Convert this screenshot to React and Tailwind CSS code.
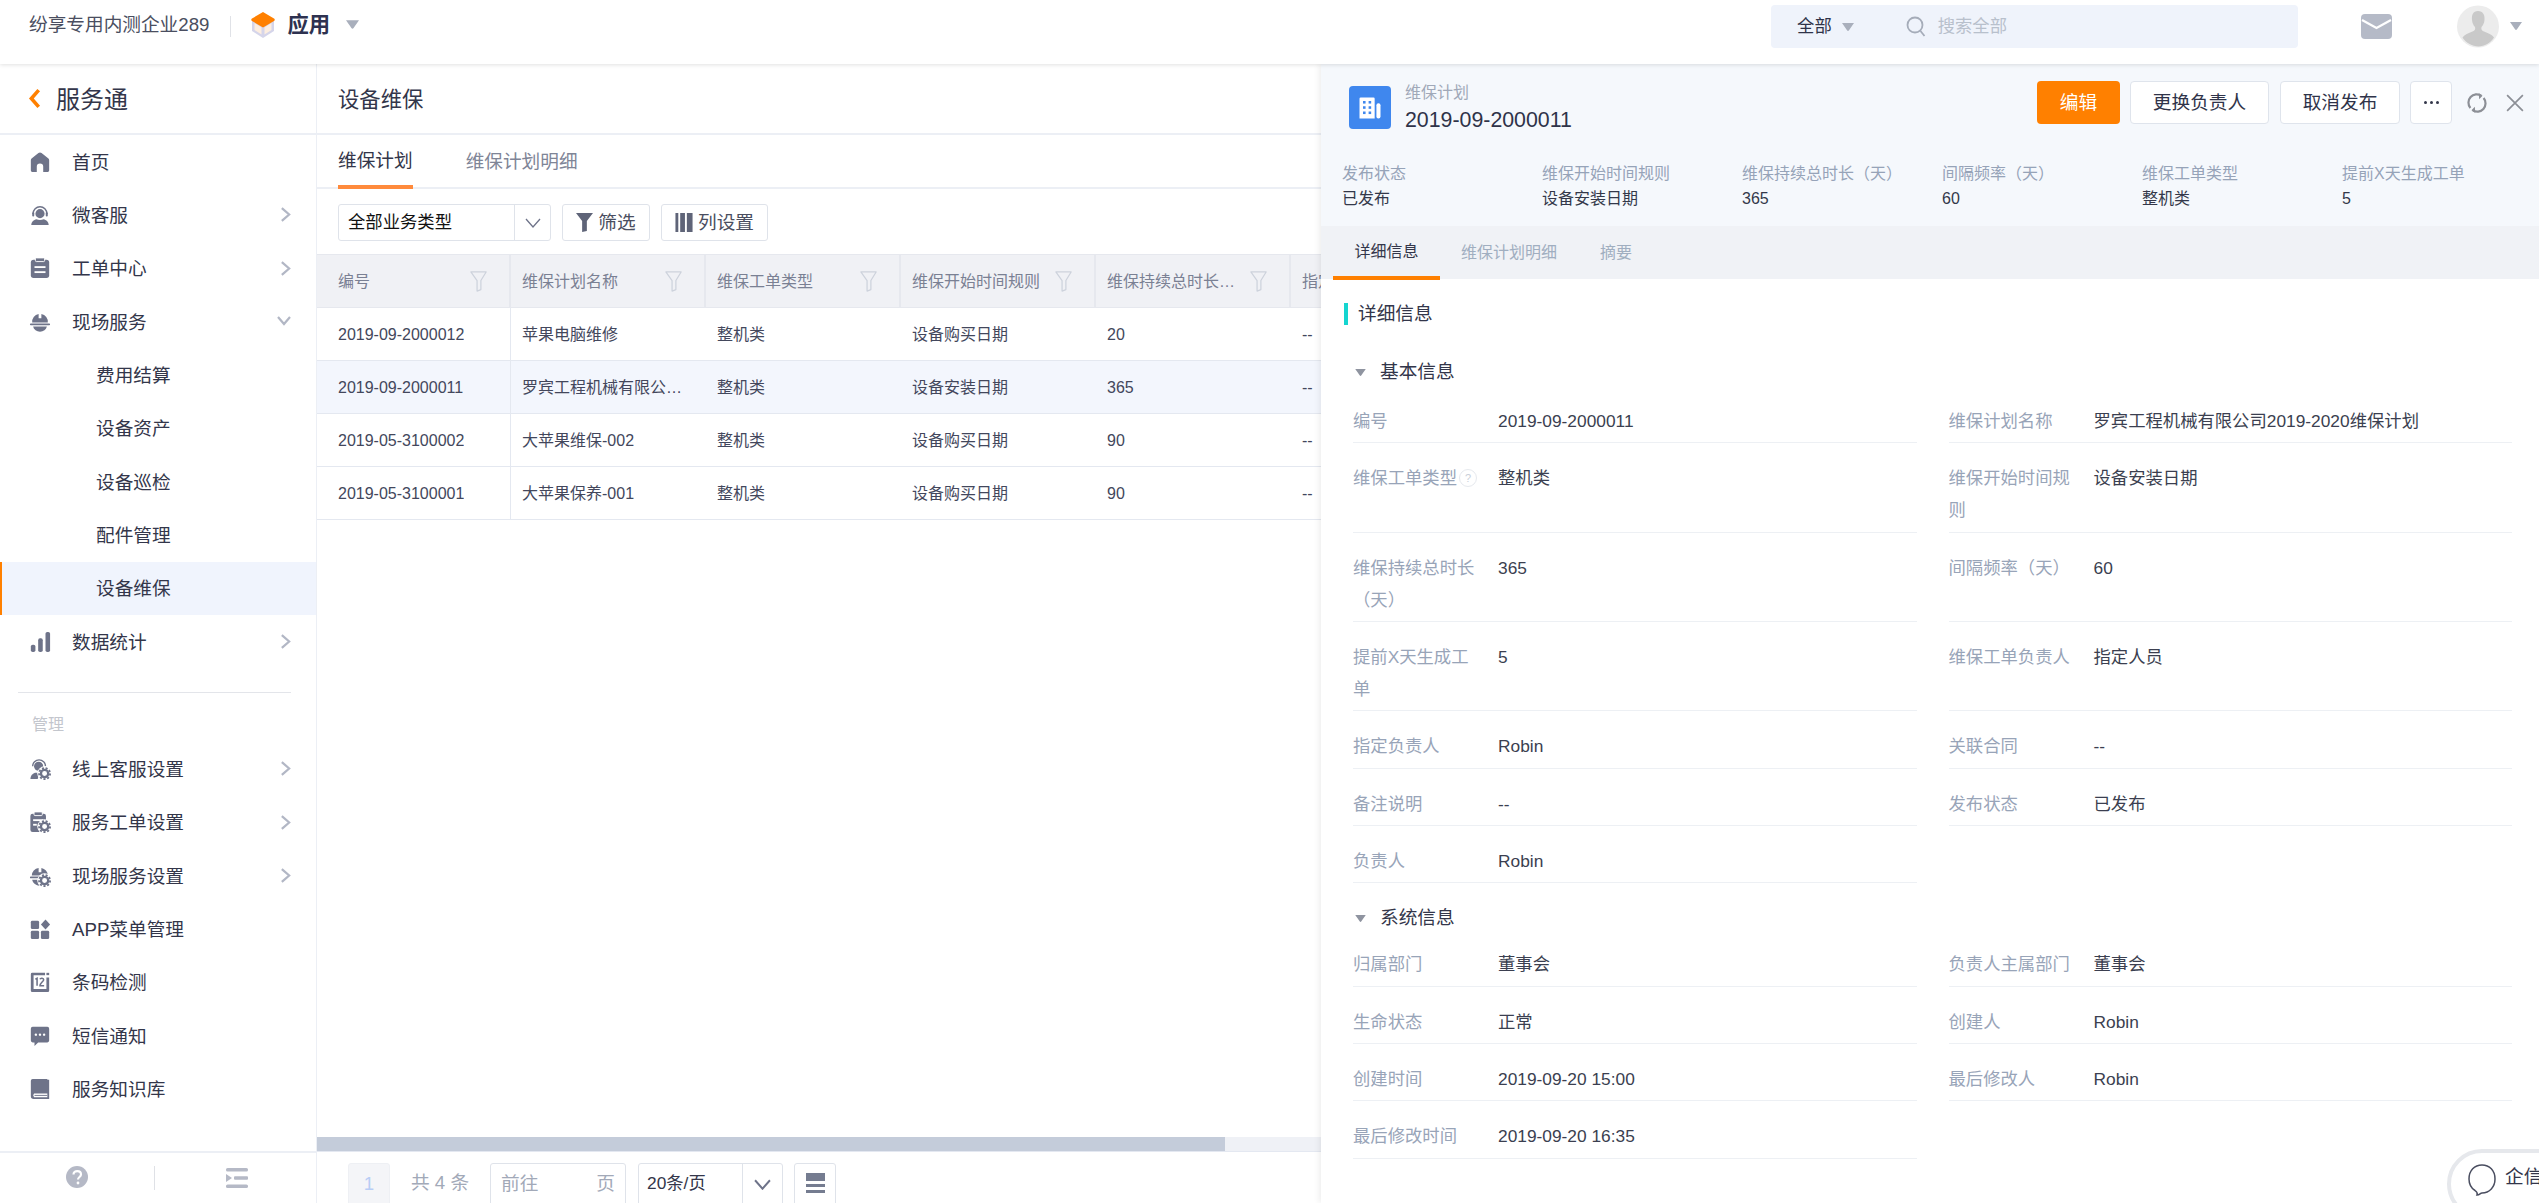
import React from 'react';

const ICON = '#6e7389';

function Gear({ x = 17, y = 17 }) {
  return (
    <g>
      <circle cx={x} cy={y} r="8" fill="#fff" />
      <circle cx={x} cy={y} r="4" fill="none" stroke={ICON} strokeWidth="2.6" />
      <circle cx={x} cy={y} r="6" fill="none" stroke={ICON} strokeWidth="2" strokeDasharray="2.2 1.9" />
    </g>
  );
}

const icons = {
  home: <path d="M12 1.5c.6 0 1.2.2 1.7.6l7.5 6.2c.5.4.8 1.1.8 1.8V21c0 1.1-.9 2-2 2h-4.5v-6a3.5 3.5 0 0 0-7 0v6H4c-1.1 0-2-.9-2-2V10.100c0-.7.3-1.400.8-1.800l7.500-6.200c.5-.4 1.100-.6 1.700-.6z" fill={ICON} />,
  agent: (
    <g>
      <path d="M4.500 10.500a7.500 7.500 0 0 1 15 0" fill="none" stroke={ICON} strokeWidth="1.600" />
      <circle cx="12" cy="10.500" r="5" fill={ICON} />
      <rect x="3.500" y="9" width="2.200" height="4.500" rx="1" fill={ICON} />
      <rect x="18.300" y="9" width="2.200" height="4.500" rx="1" fill={ICON} />
      <path d="M2.500 23c0-3.800 3-6 5.500-6.500 2.500 1.200 5.500 1.200 8 0 2.500.5 5.500 2.700 5.500 6.500z" fill={ICON} />
    </g>
  ),
  order: (
    <g>
      <rect x="2" y="3" width="20" height="20" rx="3" fill={ICON} />
      <rect x="7" y="1" width="10" height="4" rx="1" fill={ICON} stroke="#fff" strokeWidth="1" />
      <rect x="6" y="10" width="12" height="2" fill="#fff" />
      <rect x="6" y="15.500" width="12" height="2" fill="#fff" />
    </g>
  ),
  helmet: (
    <g>
      <path d="M3.500 12.500A8.500 8.500 0 0 1 10.500 3.200V8h3V3.200a8.500 8.500 0 0 1 7 9.300z" fill={ICON} />
      <rect x="1" y="13.500" width="22" height="2" rx="1" fill={ICON} />
      <path d="M4.500 17h15c-.8 3.600-3.800 5.500-7.500 5.500S5.300 20.600 4.500 17z" fill={ICON} />
    </g>
  ),
  chart: (
    <g>
      <rect x="2" y="15" width="5" height="8" rx="2" fill={ICON} />
      <rect x="10" y="8" width="5" height="15" rx="2" fill={ICON} />
      <rect x="18" y="1" width="5" height="22" rx="2" fill={ICON} />
    </g>
  ),
  agentGear: (
    <g>
      <path d="M4 9a7 7 0 0 1 14 0" fill="none" stroke={ICON} strokeWidth="1.500" />
      <circle cx="10.500" cy="9" r="5" fill={ICON} />
      <path d="M1.500 23c0-3.500 2-6 5-7h5l-2 7z" fill={ICON} />
      <Gear />
    </g>
  ),
  orderGear: (
    <g>
      <rect x="1.500" y="3" width="17" height="20" rx="2.500" fill={ICON} />
      <rect x="5.500" y="1" width="9" height="4" rx="1" fill={ICON} stroke="#fff" strokeWidth="1" />
      <rect x="4.500" y="9" width="11" height="2" fill="#fff" />
      <rect x="4.500" y="14" width="4" height="2" fill="#fff" />
      <Gear />
    </g>
  ),
  helmetGear: (
    <g>
      <path d="M3 11.500A8.500 8.500 0 0 1 10.500 3.200V8h3V3.200a8.500 8.500 0 0 1 7 8.300z" fill={ICON} />
      <rect x="1" y="12.500" width="20" height="2" rx="1" fill={ICON} />
      <path d="M3.500 16h11v6.500c-5 .5-10-1.500-11-6.500z" fill={ICON} />
      <Gear />
    </g>
  ),
  apps: (
    <g>
      <rect x="2" y="3" width="9" height="9" rx="1.500" fill={ICON} />
      <path d="M18 1.500l5 5.500-5 5.500-5-5.500z" fill={ICON} />
      <rect x="2" y="14" width="9" height="9" rx="1.500" fill={ICON} />
      <rect x="13" y="14" width="9" height="9" rx="1.500" fill={ICON} />
    </g>
  ),
  barcode: (
    <g>
      <path d="M3.500 2h14v2.500H5v15h14V7h3v14.500a1.500 1.500 0 0 1-1.500 1.500h-17A1.500 1.500 0 0 1 2 21.500v-18A1.500 1.500 0 0 1 3.500 2z" fill={ICON} />
      <rect x="19" y="2" width="3" height="2.500" fill={ICON} />
      <path d="M7 9l1.800-1v8M12 9c.5-1.500 4-1.500 4 .5 0 2-4 3.500-4 6.500h4.500" fill="none" stroke={ICON} strokeWidth="1.700" />
    </g>
  ),
  sms: (
    <g>
      <path d="M4 2h16a2 2 0 0 1 2 2v13a2 2 0 0 1-2 2H10l-4 4v-4H4a2 2 0 0 1-2-2V4a2 2 0 0 1 2-2z" fill={ICON} />
      <circle cx="7.500" cy="10.500" r="1.300" fill="#fff" />
      <circle cx="12" cy="10.500" r="1.300" fill="#fff" />
      <circle cx="16.500" cy="10.500" r="1.300" fill="#fff" />
    </g>
  ),
  book: (
    <g>
      <path d="M4 1h16v16H5.500a3 3 0 0 0 0 4H20V2h2v21H5a3 3 0 0 1-3-3V3a2 2 0 0 1 2-2z" fill={ICON} />
      <path d="M6 19h14" stroke={ICON} strokeWidth="1" />
    </g>
  ),
};

function Icon({ name }) {
  return (
    <svg viewBox="0 0 24 24" className="w-[22px] h-[22px] shrink-0">
      {icons[name]}
    </svg>
  );
}

function Chevron({ down }) {
  if (down) {
    return (
      <svg viewBox="0 0 14 10" className="w-[14px] h-[10px] mb-[2px]" fill="none" stroke="#b2b7c5" strokeWidth="2.200">
        <polyline points="1,1 7,8 13,1" />
      </svg>
    );
  }
  return (
    <svg viewBox="0 0 12 18" className="w-[11px] h-[17px]" fill="none" stroke="#b2b7c5" strokeWidth="2.400">
      <polyline points="2,2 10,9 2,16" />
    </svg>
  );
}

function Caret({ className = 'w-[13px] h-[9px]', color = '#a9afbc' }) {
  return (
    <svg viewBox="0 0 12 8" className={className}>
      <path d="M0 0h12L7 7.200a1.200 1.200 0 0 1-2 0z" fill={color} />
    </svg>
  );
}

function FilterOutline() {
  return (
    <svg viewBox="0 0 18 22" className="w-[19px] h-[21px] shrink-0" fill="none" stroke="#cdd2dc" strokeWidth="1.300">
      <path d="M1 1h16l-5.500 9v9.500L7.500 21V10z" strokeLinejoin="round" />
    </svg>
  );
}

const menuTop = [
  { name: '首页', icon: 'home' },
  { name: '微客服', icon: 'agent', arrow: true },
  { name: '工单中心', icon: 'order', arrow: true },
  { name: '现场服务', icon: 'helmet', open: true },
];
const subMenu = ['费用结算', '设备资产', '设备巡检', '配件管理', '设备维保'];
const menuAdmin = [
  { name: '线上客服设置', icon: 'agentGear', arrow: true },
  { name: '服务工单设置', icon: 'orderGear', arrow: true },
  { name: '现场服务设置', icon: 'helmetGear', arrow: true },
  { name: 'APP菜单管理', icon: 'apps' },
  { name: '条码检测', icon: 'barcode' },
  { name: '短信通知', icon: 'sms' },
  { name: '服务知识库', icon: 'book' },
];

function MenuItem({ item }) {
  return (
    <div className="h-[53.33px] flex items-center pl-[29px] pr-[25px] text-[18.67px] text-[#33364a]">
      <Icon name={item.icon} />
      <span className="ml-[21px] flex-1 pt-[2px]">{item.name}</span>
      {item.arrow && <Chevron />}
      {item.open && <Chevron down />}
    </div>
  );
}

function Sidebar() {
  return (
    <aside className="w-[317px] shrink-0 flex flex-col border-r border-[#eceff5] bg-white">
      <div className="h-[71px] flex items-center pl-[28px] border-b-2 border-[#eceff5]">
        <svg viewBox="0 0 12 20" className="w-[13px] h-[21px]" fill="none" stroke="#ff8000" strokeWidth="3.400">
          <polyline points="10,2 3,10 10,18" />
        </svg>
        <span className="ml-[15px] pt-[2px] text-[24px] text-[#33364a]">服务通</span>
      </div>
      <div className="flex-1">
        {menuTop.map((m) => <MenuItem key={m.name} item={m} />)}
        {subMenu.map((s) => (
          <div
            key={s}
            className={`h-[53.33px] flex items-center pt-[2px] text-[18.67px] text-[#33364a] ${s === '设备维保' ? 'pl-[94px] border-l-2 border-[#ff8000] bg-[#f0f4fd]' : 'pl-[96px]'}`}
          >
            {s}
          </div>
        ))}
        <MenuItem item={{ name: '数据统计', icon: 'chart', arrow: true }} />
        <div className="mt-[24px] ml-[18px] mr-[25px] border-t border-[#e3e5ea]" />
        <div className="h-[49px] flex items-end pb-[8px] pl-[32px] text-[16px] leading-[18px] text-[#c3c6cd]">管理</div>
        {menuAdmin.map((m) => <MenuItem key={m.name} item={m} />)}
      </div>
      <div className="h-[52px] border-t-2 border-[#eceff5] flex items-center">
        <div className="w-[155px] h-[24px] flex justify-center border-r border-[#dfe1e6]">
          <svg viewBox="0 0 22 22" className="w-[22px] h-[22px]">
            <circle cx="11" cy="11" r="11" fill="#b5b9c6" />
            <path d="M7.500 8.500c0-4.500 7.500-4.500 7.500 0 0 2.500-3 2.500-3 5" fill="none" stroke="#fff" strokeWidth="2.200" />
            <circle cx="12" cy="17" r="1.400" fill="#fff" />
          </svg>
        </div>
        <div className="flex-1 flex justify-center pl-[2px]">
          <svg viewBox="0 0 22 20" className="w-[22px] h-[20px]" fill="#b5b9c6">
            <rect x="0" y="0" width="22" height="3.600" rx="1.600" />
            <rect x="8" y="8.200" width="14" height="3.600" rx="1" />
            <path d="M0 6l6 4-6 4z" />
            <rect x="0" y="16.400" width="22" height="3.600" rx="1.600" />
          </svg>
        </div>
      </div>
    </aside>
  );
}

const columns = ['编号', '维保计划名称', '维保工单类型', '维保开始时间规则', '维保持续总时长（天）', '指定负责人'];
const rows = [
  ['2019-09-2000012', '苹果电脑维修', '整机类', '设备购买日期', '20', '--'],
  ['2019-09-2000011', '罗宾工程机械有限公司2019-2020维保计划', '整机类', '设备安装日期', '365', '--'],
  ['2019-05-3100002', '大苹果维保-002', '整机类', '设备购买日期', '90', '--'],
  ['2019-05-3100001', '大苹果保养-001', '整机类', '设备购买日期', '90', '--'],
];

function MainPanel() {
  return (
    <main className="w-[1004px] shrink-0 flex flex-col overflow-hidden bg-white">
      <div className="h-[71px] flex items-center pl-[21px] pt-[4px] border-b-2 border-[#eceff5] text-[21.33px] text-[#33364a]">设备维保</div>
      <div className="h-[54px] flex items-stretch pl-[21px] border-b-2 border-[#eceff5] text-[18.67px]">
        <div className="flex items-center pt-[2px] h-[54px] border-b-4 border-[#ff8a3c] text-[#33364a]">维保计划</div>
        <div className="flex items-center pt-[2px] h-[52px] ml-[53px] text-[#7f8597]">维保计划明细</div>
      </div>
      <div className="mt-[15px] ml-[21px] flex items-stretch h-[37px] gap-[11px]">
        <div className="w-[213px] flex items-center border border-[#dfe3ea] rounded-[3px]">
          <span className="flex-1 pl-[9px] text-[17.33px] text-[#111]">全部业务类型</span>
          <div className="w-[36px] h-full border-l border-[#dfe3ea] flex items-center justify-center">
            <svg viewBox="0 0 16 10" className="w-[16px] h-[10px]" fill="none" stroke="#6e7389" strokeWidth="1.300"><polyline points="1,1 8,9 15,1" /></svg>
          </div>
        </div>
        <div className="w-[88px] flex items-center justify-center gap-[5px] border border-[#dfe3ea] rounded-[3px] text-[18.67px] text-[#4a4e60]">
          <svg viewBox="0 0 18 20" className="w-[17px] h-[19px]" fill="#5f6478"><path d="M0 0h18l-6.500 8.500V19l-5 1V8.500z" /></svg>
          筛选
        </div>
        <div className="w-[107px] flex items-center justify-center gap-[5px] border border-[#dfe3ea] rounded-[3px] text-[18.67px] text-[#4a4e60]">
          <svg viewBox="0 0 18 20" className="w-[18px] h-[19px]" fill="#5f6478">
            <rect x="0" y="0" width="3" height="20" />
            <rect x="5" y="0" width="5" height="20" />
            <rect x="12" y="0" width="6" height="20" />
          </svg>
          列设置
        </div>
      </div>
      <div className="mt-[13px] flex-1 min-h-0">
        <div className="flex h-[54px] bg-[#f0f1f5] border-y border-[#e6e8ee]">
          {columns.map((c, i) => (
            <div key={c} className={`shrink-0 flex items-center border-r-2 border-[#e6e8ee] pr-[21px] text-[16px] text-[#7a8093] ${i === 0 ? 'w-[194px] pl-[21px]' : 'w-[195px] pl-[11px]'}`}>
              <span className="flex-1 truncate pr-[8px] pt-[1px]">{c}</span>
              <FilterOutline />
            </div>
          ))}
        </div>
        {rows.map((r, idx) => (
          <div key={r[0]} className={`flex h-[53px] border-b border-[#e4e8f0] ${idx === 1 ? 'bg-[#f3f6fd]' : ''}`}>
            {r.map((v, i) => (
              <div key={i} className={`shrink-0 flex items-center text-[16px] text-[#43475c] ${i === 0 ? 'w-[194px] pl-[21px] border-r border-[#e4e8f0]' : 'w-[195px] pl-[11px] pr-[15px]'}`}>
                <span className="truncate pt-[2px]">{v}</span>
              </div>
            ))}
          </div>
        ))}
      </div>
      <div className="h-[15px] bg-[#eff1f6] border-b border-[#e4e8f1]">
        <div className="w-[908px] h-[14px] bg-[#c4ccda]" />
      </div>
      <div className="h-[51px] flex items-start pt-[11px] pl-[31px] overflow-hidden">
        <div className="w-[42px] h-[60px] bg-[#f4f5f8] border border-[#eef0f4] rounded-[3px] pt-[6px] text-center text-[18.67px] text-[#b8cdf5]">1</div>
        <div className="ml-[21px] w-[79px] pt-[6px] text-[18.67px] text-[#a2a9b8]">共 4 条</div>
        <div className="w-[136px] h-[60px] border border-[#dfe3ea] rounded-[3px] flex justify-between px-[10px] pt-[6px] text-[18.67px] text-[#a2a9b8]">
          <span>前往</span>
          <span>页</span>
        </div>
        <div className="ml-[12px] w-[145px] h-[60px] border border-[#dfe3ea] rounded-[3px] flex">
          <span className="w-[103px] pl-[8px] pt-[7px] text-[17.33px] text-[#33364a]">20条/页</span>
          <div className="flex-1 border-l border-[#dfe3ea] flex justify-center pt-[15px]">
            <svg viewBox="0 0 16 10" className="w-[17px] h-[11px]" fill="none" stroke="#6e7389" strokeWidth="1.800"><polyline points="1,1 8,9 15,1" /></svg>
          </div>
        </div>
        <div className="ml-[11px] w-[42px] h-[60px] border border-[#dfe3ea] rounded-[3px] flex flex-col items-center pt-[9px] gap-[3px]">
          <div className="w-[19px] h-[8px] bg-[#757c90]" />
          <div className="w-[19px] h-[3px] bg-[#757c90]" />
          <div className="w-[19px] h-[3px] bg-[#757c90]" />
        </div>
      </div>
    </main>
  );
}

const summary = [
  ['发布状态', '已发布'],
  ['维保开始时间规则', '设备安装日期'],
  ['维保持续总时长（天）', '365'],
  ['间隔频率（天）', '60'],
  ['维保工单类型', '整机类'],
  ['提前X天生成工单', '5'],
];

const basicFields = [
  ['编号', '2019-09-2000011'],
  ['维保计划名称', '罗宾工程机械有限公司2019-2020维保计划'],
  ['维保工单类型', '整机类', true],
  ['维保开始时间规则', '设备安装日期'],
  ['维保持续总时长（天）', '365'],
  ['间隔频率（天）', '60'],
  ['提前X天生成工单', '5'],
  ['维保工单负责人', '指定人员'],
  ['指定负责人', 'Robin'],
  ['关联合同', '--'],
  ['备注说明', '--'],
  ['发布状态', '已发布'],
  ['负责人', 'Robin'],
];

const systemFields = [
  ['归属部门', '董事会'],
  ['负责人主属部门', '董事会'],
  ['生命状态', '正常'],
  ['创建人', 'Robin'],
  ['创建时间', '2019-09-20 15:00'],
  ['最后修改人', 'Robin'],
  ['最后修改时间', '2019-09-20 16:35'],
];

function Field({ label, value, hint }) {
  return (
    <div className="flex pt-[19px] pb-[5.33px] border-b border-[#edf0f4] text-[17.33px] leading-[32px]">
      <div className="w-[125px] shrink-0 text-[#98a4b8] relative">
        {label}
        {hint && <span className="absolute left-[106px] top-[7px] w-[18px] h-[18px] flex items-center justify-center text-[11px] leading-none text-[#c9cfd9] border border-[#e6e9ee] rounded-full">?</span>}
      </div>
      <div className="ml-[20px] text-[#3b3f50]">{value}</div>
    </div>
  );
}

function FieldGrid({ fields }) {
  return (
    <div className="grid grid-cols-2 gap-x-[32px] pl-[32px] pr-[27px]">
      {fields.map((f) => <Field key={f[0]} label={f[0]} value={f[1]} hint={f[2]} />)}
    </div>
  );
}

function SectionHead({ title, className }) {
  return (
    <div className={`h-[28px] flex items-center pl-[34px] text-[18.67px] text-[#33364a] ${className}`}>
      <Caret className="w-[11px] h-[7px]" color="#8f94a0" />
      <span className="ml-[14px]">{title}</span>
    </div>
  );
}

function DetailPanel() {
  return (
    <section className="flex-1 min-w-0 relative bg-white shadow-[-2px_0_6px_rgba(0,0,0,0.07)] z-[1]">
      <div className="h-[162px] bg-[#f5f8fc]">
        <div className="flex items-start pt-[17px] pl-[28px] pr-[15px]">
          <div className="w-[42px] h-[43px] mt-[5px] bg-[#3f87ee] rounded-[4px] flex items-center justify-center">
            <svg viewBox="0 0 24 24" className="w-[28px] h-[28px]" fill="#fff">
              <path d="M4 3h11a1 1 0 0 1 1 1v17H3V4a1 1 0 0 1 1-1z" />
              <rect x="17.500" y="8" width="3.500" height="13" rx="1.700" />
              <g fill="#3f87ee">
                <rect x="6" y="6" width="2.200" height="2.200" />
                <rect x="10.800" y="6" width="2.200" height="2.200" />
                <rect x="6" y="10.500" width="2.200" height="2.200" />
                <rect x="10.800" y="10.500" width="2.200" height="2.200" />
                <rect x="6" y="15" width="2.200" height="2.200" />
                <rect x="10.800" y="15" width="2.200" height="2.200" />
              </g>
            </svg>
          </div>
          <div className="ml-[14px] flex-1">
            <div className="text-[16px] leading-[24px] text-[#a0a8b8]">维保计划</div>
            <div className="mt-[1px] text-[21.33px] leading-[28px] text-[#2f3349]">2019-09-2000011</div>
          </div>
          <div className="flex items-center h-[43px]">
            <div className="w-[83px] h-full bg-[#ff8000] rounded-[4px] flex items-center justify-center text-[18.67px] text-white">编辑</div>
            <div className="ml-[10px] w-[139px] h-full bg-white border border-[#dfe4ec] rounded-[4px] flex items-center justify-center text-[18.67px] text-[#2f3349]">更换负责人</div>
            <div className="ml-[11px] w-[120px] h-full bg-white border border-[#dfe4ec] rounded-[4px] flex items-center justify-center text-[18.67px] text-[#2f3349]">取消发布</div>
            <div className="ml-[10px] w-[42px] h-full bg-white border border-[#dfe4ec] rounded-[4px] flex items-center justify-center gap-[3px]">
              <span className="w-[3px] h-[3px] bg-[#33364a] rounded-full" />
              <span className="w-[3px] h-[3px] bg-[#33364a] rounded-full" />
              <span className="w-[3px] h-[3px] bg-[#33364a] rounded-full" />
            </div>
            <svg viewBox="0 0 20 20" className="ml-[14px] w-[22px] h-[22px]" fill="none" stroke="#8c8f96" strokeWidth="2">
              <path d="M4 14.500A7.500 7.500 0 0 1 14 3.500M16 5.500A7.500 7.500 0 0 1 6 16.500" />
              <path d="M11.500 1l3.500 2.500-3 3zM8.500 19l-3.500-2.500 3-3z" fill="#8c8f96" stroke="none" />
            </svg>
            <svg viewBox="0 0 16 16" className="ml-[18px] w-[18px] h-[18px]" fill="none" stroke="#8c8f96" strokeWidth="1.500">
              <path d="M1 1l14 14M15 1L1 15" />
            </svg>
          </div>
        </div>
        <div className="mt-[27px] ml-[21px] grid grid-cols-[repeat(6,200px)] text-[16px] leading-[25px]">
          {summary.map(([k, v]) => (
            <div key={k}>
              <div className="text-[#96a3b8]">{k}</div>
              <div className="text-[#33384a]">{v}</div>
            </div>
          ))}
        </div>
      </div>
      <div className="h-[53px] bg-[#f0f2f6] flex items-stretch text-[16px] text-[#a0aec0] pl-[12px]">
        <div className="w-[107px] h-[54px] flex items-center justify-center pt-[1px] border-b-4 border-[#ff8000] text-[#33364a]">详细信息</div>
        <div className="ml-[21px] flex items-center">维保计划明细</div>
        <div className="ml-[43px] flex items-center">摘要</div>
      </div>
      <div className="mt-[24px] ml-[23px] h-[22px] flex items-center border-l-4 border-[#15d5d0] pl-[10px] text-[18.67px] text-[#33364a]">详细信息</div>
      <SectionHead title="基本信息" className="mt-[33px]" />
      <FieldGrid fields={basicFields} />
      <SectionHead title="系统信息" className="mt-[21px] mb-[-3px]" />
      <FieldGrid fields={systemFields} />
      <div className="absolute left-[1126px] top-[1085px] w-[140px] h-[70px] bg-white border-4 border-[#e6e8ec] rounded-full flex items-start pt-[10px] pl-[16px] gap-[8px]">
        <svg viewBox="0 0 30 34" className="w-[30px] h-[34px] shrink-0" fill="none" stroke="#4a4e60" strokeWidth="1.500">
          <path d="M15 2c7.500 0 13 5.500 13 14 0 8-5.500 14-13 14-2 0-2 2-5 2 1-2 0-3-2-4.500C4 25 2 21 2 16 2 7.500 7.500 2 15 2z" />
        </svg>
        <span className="text-[18.67px] whitespace-nowrap text-[#33364a]">企信</span>
      </div>
    </section>
  );
}

export default function App() {
  return (
    <div className="w-[2539px] h-[1203px] overflow-hidden flex flex-col bg-white font-['Liberation_Sans','Noto_Sans_CJK_SC',sans-serif]">
      {/* 顶部栏 */}
      <header className="relative z-10 h-[64px] shrink-0 flex items-start bg-white shadow-[0_1px_4px_rgba(0,0,0,0.12)]">
        <span className="ml-[29px] mt-[12px] text-[18.67px] leading-[26px] text-[#4a4e60]">纷享专用内测企业289</span>
        <div className="ml-[21px] mt-[16px] h-[21px] border-l border-[#e0e2e7]" />
        <svg viewBox="0 0 26 26" className="ml-[19px] mt-[12px] w-[26px] h-[26px]">
          <path d="M2 8v11l11 7 11-7V8z" fill="#d5d5ea" />
          <path d="M4.500 11v7l7 4.500v-7zM21.500 11v7l-7 4.500v-7z" fill="#fdeee0" />
          <path d="M13 0l11 6.500c1 .7 1 1.800 0 2.500l-11 6.500L2 9c-1-.7-1-1.800 0-2.500z" fill="#ff8000" />
        </svg>
        <span className="ml-[11px] mt-[10px] text-[21.33px] leading-[30px] font-bold text-[#2e3250]">应用</span>
        <div className="ml-[16px] mt-[20px]"><Caret /></div>
        <div className="ml-[1412px] mt-[5px] w-[527px] h-[43px] bg-[#eff3fb] rounded-[4px] flex items-center">
          <span className="ml-[26px] text-[17.33px] text-[#2f3349]">全部</span>
          <div className="ml-[10px]"><Caret className="w-[12px] h-[8px]" /></div>
          <svg viewBox="0 0 20 22" className="ml-[52px] w-[20px] h-[22px]" fill="none" stroke="#a5acb9" strokeWidth="1.800">
            <circle cx="9" cy="9" r="7.500" />
            <path d="M14.500 15l4 5" />
          </svg>
          <span className="ml-[12px] text-[17.33px] text-[#b8c0cc]">搜索全部</span>
        </div>
        <svg viewBox="0 0 31 25" className="ml-[63px] mt-[14px] w-[31px] h-[25px]">
          <rect width="31" height="25" rx="4" fill="#b5bac7" />
          <path d="M1 6l14.500 8L30 6" fill="none" stroke="#fff" strokeWidth="2.200" />
        </svg>
        <svg viewBox="0 0 42 43" className="ml-[65px] mt-[5px] w-[42px] h-[43px]">
          <circle cx="21" cy="21.500" r="21" fill="#ececec" />
          <path d="M21 6c5 0 7 4 6.500 9-.3 3-1.500 5.500-3 7-.5 2 0 3.500 2.500 4.500 4 1.500 8 3 10 6-3.500 5.500-9.500 9-15.500 9S9 38 5.500 32.500c2-3 6-4.500 10-6 2.500-1 3-2.500 2.500-4.500-1.500-1.500-2.700-4-3-7C14.500 10 16 6 21 6z" fill="#c9c9c9" />
        </svg>
        <div className="ml-[11px] mt-[22px]"><Caret className="w-[12px] h-[8px]" /></div>
      </header>
      <div className="flex-1 min-h-0 flex">
        <Sidebar />
        <MainPanel />
        <DetailPanel />
      </div>
    </div>
  );
}
